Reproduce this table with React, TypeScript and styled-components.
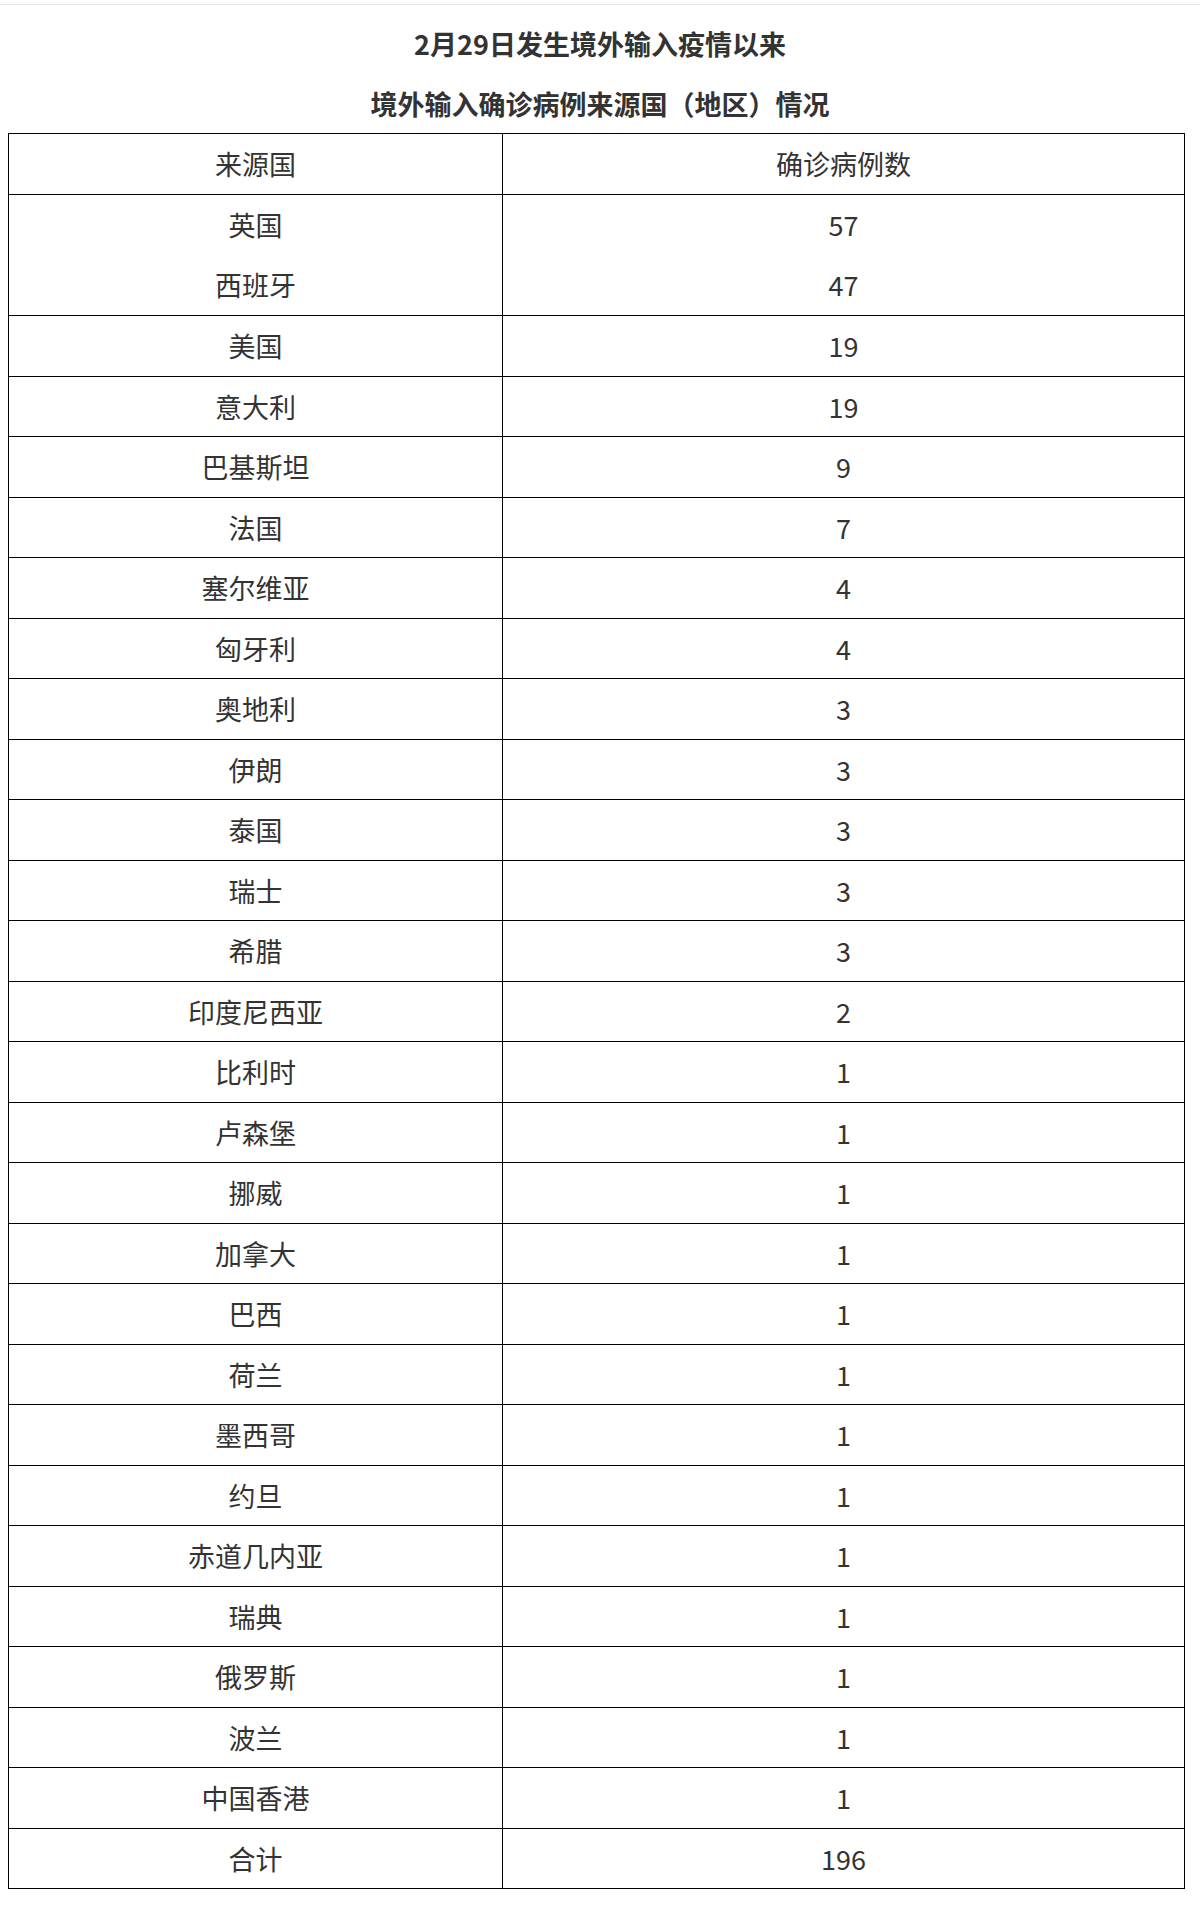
import styled, { createGlobalStyle } from "styled-components";

const GlobalStyle = createGlobalStyle`
  body {
    margin: 0;
    background: #ffffff;
    font-family: "Noto Sans CJK SC", "Noto Sans", sans-serif;
    color: #333333;
  }
`;

const Page = styled.div`
  width: 1200px;
  min-height: 1914px;
  background: #ffffff;
`;

const TopRule = styled.div`
  margin-top: 4px;
  height: 1px;
  background: #e4e4e4;
`;

const Heading = styled.div`
  padding-top: 9px;
  text-align: center;
`;

const Title = styled.p`
  margin: 0;
  font-size: 27px;
  font-weight: 700;
  line-height: 59.5px;
  color: #333333;
`;

const Table = styled.table`
  margin-left: 8px;
  width: 1177px;
  border-collapse: collapse;
  table-layout: fixed;
  font-size: 27px;
  color: #333333;
`;

const Cell = styled.td<{ $lines?: number }>`
  border: 1px solid #000000;
  padding: 0;
  text-align: center;
  vertical-align: middle;
  height: ${(p) => (p.$lines ? p.$lines * 60 : 59.5)}px;
  line-height: ${(p) => (p.$lines ? "60px" : "59.5px")};
`;

const HeadCell = styled(Cell)`
  height: 60px;
  line-height: 60px;
`;

const CellLine = styled.div`
  line-height: 60px;
`;

interface ISource {
  name: string;
  count: number;
}

const rows: ISource[] = [
  { name: "美国", count: 19 },
  { name: "意大利", count: 19 },
  { name: "巴基斯坦", count: 9 },
  { name: "法国", count: 7 },
  { name: "塞尔维亚", count: 4 },
  { name: "匈牙利", count: 4 },
  { name: "奥地利", count: 3 },
  { name: "伊朗", count: 3 },
  { name: "泰国", count: 3 },
  { name: "瑞士", count: 3 },
  { name: "希腊", count: 3 },
  { name: "印度尼西亚", count: 2 },
  { name: "比利时", count: 1 },
  { name: "卢森堡", count: 1 },
  { name: "挪威", count: 1 },
  { name: "加拿大", count: 1 },
  { name: "巴西", count: 1 },
  { name: "荷兰", count: 1 },
  { name: "墨西哥", count: 1 },
  { name: "约旦", count: 1 },
  { name: "赤道几内亚", count: 1 },
  { name: "瑞典", count: 1 },
  { name: "俄罗斯", count: 1 },
  { name: "波兰", count: 1 },
  { name: "中国香港", count: 1 },
  { name: "合计", count: 196 },
];

const App = () => {
  return (
    <Page>
      <GlobalStyle />
      <TopRule />
      <Heading>
        <Title>2月29日发生境外输入疫情以来</Title>
        <Title>境外输入确诊病例来源国（地区）情况</Title>
      </Heading>
      <Table>
        <colgroup>
          <col style={{ width: 494 }} />
          <col />
        </colgroup>
        <tbody>
          <tr>
            <HeadCell>来源国</HeadCell>
            <HeadCell>确诊病例数</HeadCell>
          </tr>
          <tr>
            <Cell $lines={2}>
              <CellLine>英国</CellLine>
              <CellLine>西班牙</CellLine>
            </Cell>
            <Cell $lines={2}>
              <CellLine>57</CellLine>
              <CellLine>47</CellLine>
            </Cell>
          </tr>
          {rows.map((row) => (
            <tr key={row.name}>
              <Cell>{row.name}</Cell>
              <Cell>{row.count}</Cell>
            </tr>
          ))}
        </tbody>
      </Table>
    </Page>
  );
};

export default App;
